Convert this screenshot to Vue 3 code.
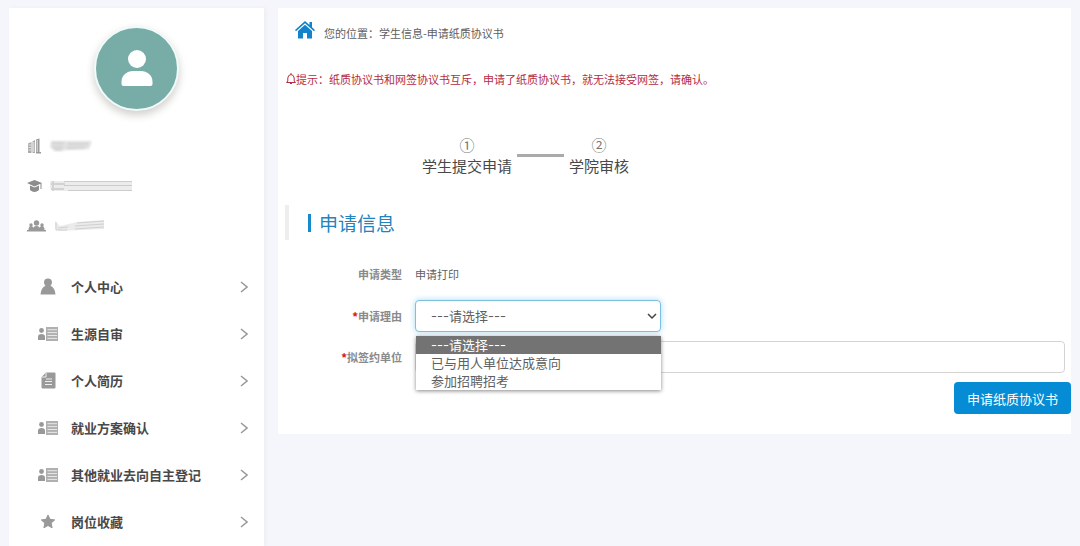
<script setup>
import { ref } from 'vue'

const menu = [
  { label: '个人中心', icon: 'user' },
  { label: '生源自审', icon: 'list' },
  { label: '个人简历', icon: 'doc' },
  { label: '就业方案确认', icon: 'list' },
  { label: '其他就业去向自主登记', icon: 'list' },
  { label: '岗位收藏', icon: 'star' },
]
const options = ['---请选择---', '已与用人单位达成意向', '参加招聘招考']
const reason = ref(options[0])
const company = ref('')
</script>

<template>
  <div class="page">
    <aside class="sidebar">
      <div class="avatar">
        <svg width="32" height="37" viewBox="0 0 32 37" fill="#fff" aria-hidden="true">
          <circle cx="16" cy="9" r="9" />
          <path d="M.5 34V32C.5 25 6 21 12 21h8c6 0 11.500 4 11.500 11v2q0 2-2 2h-27q-2 0-2-2z" />
        </svg>
      </div>
      <ul class="profile">
        <li>
          <svg width="14" height="16" viewBox="0 0 14 16" aria-hidden="true">
            <path d="M1 5.500 4.500 4v11H1zM5.500 3.500 8 2v13H5.500z" fill="#aaa" />
            <path d="M9 1.500 12.500 .5V14H14v1.500H9z" fill="#999" />
            <path d="M1.500 7h2.500M1.500 9.500h2.500M1.500 12h2.500M6.800 4v10M10.200 2v12" stroke="#f4f4f4" stroke-width=".8" />
          </svg>
          <svg class="smudge near" width="46" height="14" viewBox="0 0 46 14" aria-hidden="true">
            <path d="M3 2h16l25 0-3 8-20 1-14 1-5-4z" fill="#e2e2e2" />
            <path d="M4 4h12M4 8h11M6 11h8M20 5h20M19 9h18" stroke="#d2d2d2" stroke-width="2" />
          </svg>
        </li>
        <li>
          <svg width="16" height="14" viewBox="0 0 16 14" fill="#8c8c8c" aria-hidden="true">
            <path d="M7.500 1 15 4 7.500 7.500 0 4zM3 6.500l4.500 2 4.500-2V11q-4.500 4-9 0zM13.500 4h1v6h-1z" />
          </svg>
          <svg class="smudge sharp" width="84" height="14" viewBox="0 0 84 14" aria-hidden="true">
            <path d="M0 2h82v10H5L0 9z" fill="#ececec" />
            <path d="M3 2v10M1 5h14M1 10h13" stroke="#d2d2d2" stroke-width="2" />
            <path d="M14 2.500h68M14 6.500h68M18 11.500h64" stroke="#ccc" />
          </svg>
        </li>
        <li>
          <svg width="19" height="12" viewBox="0 0 19 12" fill="#999" aria-hidden="true">
            <circle cx="9.500" cy="3" r="2.700" /><path d="M5.500 11q0-5 4-5t4 5z" />
            <circle cx="4" cy="5" r="1.700" /><path d="M1.500 10q0-4 2.500-4t2.500 4z" />
            <circle cx="15" cy="5" r="1.700" /><path d="M12.500 10q0-4 2.500-4t2.500 4zM0 10h19v1.500H0z" />
          </svg>
          <svg class="smudge sharp" width="54" height="14" viewBox="0 0 54 14" aria-hidden="true">
            <path d="M2 2l5 5 17-4 27-2v9l-24 1-20 1-5-2z" fill="#ebebeb" />
            <path d="M3 3v8h11M5 9l10-1M24 4l27-2M22 7l29-2M22 10l29-2" stroke="#d0d0d0" fill="none" />
          </svg>
        </li>
      </ul>
      <nav>
        <a v-for="item in menu" :key="item.label" href="#" class="menu-item">
          <span class="menu-icon">
            <svg v-if="item.icon === 'user'" width="16" height="17" viewBox="0 0 16 17" fill="#999" aria-hidden="true">
              <path d="M8 .5c2.700 0 4 1.600 4 3.700 0 1.500-.6 2.700-1.500 3.600q4.500 2 5 8.700H.5Q1 9.800 5.500 7.800C4.600 6.900 4 5.700 4 4.200 4 2.100 5.300.5 8 .5z" />
            </svg>
            <svg v-else-if="item.icon === 'list'" width="20" height="14" viewBox="0 0 20 14" aria-hidden="true">
              <circle cx="3.500" cy="3.500" r="2.400" fill="#999" />
              <path d="M0 13V9.500Q0 7 3.500 7T7 9.500V13z" fill="#999" />
              <path d="M8 0h12v14H8z" fill="#b0b0b0" />
              <path d="M9.500 2.700H19M9.500 5.600H19M9.500 8.500H19M9.500 11.400H19" stroke="#e8e8e8" />
            </svg>
            <svg v-else-if="item.icon === 'doc'" width="15" height="17" viewBox="0 0 15 17" aria-hidden="true">
              <path d="M5 .5h8.500q1 0 1 1v14q0 1-1 1h-12q-1 0-1-1V5z" fill="#999" />
              <path d="M.5 5H5V.5M5 7h6M4 9.500h7M4 12.500h7" stroke="#eee" fill="none" />
            </svg>
            <svg v-else width="16" height="15" viewBox="0 0 16 15" fill="#999" stroke="#999" stroke-linejoin="round" aria-hidden="true">
              <path d="M8 1l2 4.300 4.700.6-3.500 3.200.9 4.700L8 11.500l-4.100 2.300.9-4.700L1.300 5.900 6 5.300z" />
            </svg>
          </span>
          <span class="menu-label">{{ item.label }}</span>
          <svg width="8" height="12" viewBox="0 0 8 12" fill="none" stroke="#999" stroke-width="1.500" aria-hidden="true">
            <path d="M1 1l6 5-6 5" />
          </svg>
        </a>
      </nav>
    </aside>

    <main class="card">
      <div class="crumb">
        <svg width="20" height="18" viewBox="0 0 20 18" fill="#1183cb" aria-hidden="true">
          <path d="M10 0 0 9l1 1.200L10 2.300l9 7.900L20 9l-3-2.700V1h-2.500v3z" />
          <path d="M3 10l7-6.300L17 10v7.500h-5V12H8v5.500H3z" />
        </svg>
        <span>您的位置：学生信息-申请纸质协议书</span>
      </div>
      <p class="tip">
        <svg width="10" height="12" viewBox="0 0 10 12" fill="none" stroke="#b52c45" aria-hidden="true">
          <path d="M.5 9.500h9L8.200 8V5Q8 2 5 1.500 2 2 1.800 5v3zM3.500 9.500q1.500 3 3 0M5 0v1.500" />
        </svg>
        <span>提示：纸质协议书和网签协议书互斥，申请了纸质协议书，就无法接受网签，请确认。</span>
      </p>
      <ol class="steps">
        <li><span class="num">①</span>学生提交申请</li>
        <li class="line" aria-hidden="true"></li>
        <li><span class="num">②</span>学院审核</li>
      </ol>
      <div class="section"><h2>申请信息</h2></div>
      <form class="form" @submit.prevent>
        <span class="label">申请类型</span>
        <span class="value">申请打印</span>
        <label class="label" for="reason"><b>*</b>申请理由</label>
        <div class="select-wrap">
          <select id="reason" v-model="reason">
            <option v-for="o in options" :key="o">{{ o }}</option>
          </select>
          <svg class="caret" width="10" height="7" viewBox="0 0 10 7" fill="none" stroke="#444" stroke-width="1.500" aria-hidden="true">
            <path d="M1 1l4 4 4-4" />
          </svg>
          <ul class="dropdown" role="listbox" aria-label="申请理由">
            <li v-for="o in options" :key="o" role="option" :aria-selected="o === reason" :class="{ active: o === reason }" @click="reason = o">{{ o }}</li>
          </ul>
        </div>
        <label class="label" for="company"><b>*</b>拟签约单位</label>
        <input id="company" v-model="company" type="text" />
        <button type="submit">申请纸质协议书</button>
      </form>
    </main>
  </div>
</template>

<style>
body {
  background: #f5f6fc;
}
</style>

<style scoped>
.page {
  display: flex;
  align-items: flex-start;
  gap: 14px;
  box-sizing: border-box;
  min-height: 100vh;
  padding: 8px 9px 0;
  font-family: "Noto Sans CJK SC", sans-serif;
  font-size: 11px;
  color: #606060;
}
ul, ol {
  list-style: none;
  margin: 0;
  padding: 0;
}
svg {
  display: block;
  flex: none;
}
.sidebar {
  flex: 0 0 255px;
  align-self: stretch;
  background: #fefffe;
  box-shadow: 2px 0 4px #eceef0;
}
.avatar {
  display: flex;
  align-items: center;
  justify-content: center;
  width: 81px;
  height: 81px;
  margin: 18px auto 0;
  border: 2px solid #f0fbf9;
  border-radius: 50%;
  background: #78ada7;
  box-shadow: 0 4px 8px #d0cccc;
}
.profile {
  padding: 15px 18px 17px;
}
.profile li {
  display: flex;
  align-items: center;
  gap: 7px;
  height: 40px;
}
.smudge {
  filter: blur(1px);
}
.smudge.sharp {
  filter: blur(0.5px);
}
.menu-item {
  display: flex;
  align-items: center;
  height: 47px;
  padding: 0 16px 0 29px;
  color: #484848;
  font-size: 13px;
  font-weight: 700;
  text-decoration: none;
}
.menu-icon {
  display: flex;
  justify-content: center;
  width: 20px;
  margin-right: 13px;
}
.menu-label {
  flex: 1;
}
.card {
  flex: 1;
  min-width: 0;
  background: #fff;
  padding-bottom: 20px;
}
.crumb {
  display: flex;
  align-items: center;
  gap: 9px;
  height: 20px;
  padding: 12px 17px 0;
}
.crumb span {
  padding-top: 6px;
}
.tip {
  display: flex;
  align-items: center;
  height: 20px;
  margin: 29px 8px 0;
  color: #b52c45;
}
.steps {
  display: flex;
  align-items: center;
  gap: 5px;
  margin: 45px 0 0 144px;
  color: #484848;
  font-size: 15px;
  line-height: 21px;
}
.steps li {
  display: flex;
  flex-direction: column;
  align-items: center;
}
.steps .line {
  width: 47px;
  height: 3px;
  background: #aaa;
}
.num {
  color: #777;
}
.section {
  display: flex;
  align-items: center;
  height: 35px;
  margin: 29px 7px 0;
  padding-left: 19px;
  border-left: 4px solid #eee;
}
h2 {
  margin: 0;
  padding-left: 8px;
  border-left: 3px solid #168acb;
  color: #2384bd;
  font-size: 19px;
  font-weight: 400;
  line-height: 18px;
}
.form {
  display: grid;
  grid-template-columns: 124px 1fr;
  align-items: center;
  column-gap: 13px;
  row-gap: 9px;
  margin-top: 17px;
}
.label {
  color: #8a8a8a;
  font-weight: 700;
  text-align: right;
}
.label b {
  color: #d22;
}
.value {
  line-height: 34px;
}
.select-wrap {
  position: relative;
  width: 246px;
}
select {
  display: block;
  box-sizing: border-box;
  width: 100%;
  height: 32px;
  padding: 0 15px;
  appearance: none;
  border: 1px solid #7dbfe0;
  border-radius: 4px;
  outline: none;
  background: #fff;
  box-shadow: 0 0 6px #a9dbf0;
  color: #606060;
  font: 13px Inter, "Noto Sans CJK SC", sans-serif;
}
.caret {
  position: absolute;
  top: 13px;
  right: 4px;
}
.dropdown {
  position: absolute;
  z-index: 1;
  top: 36px;
  left: 1px;
  right: 0;
  background: #fff;
  box-shadow: 0 1px 4px #888;
  font: 13px/18px Inter, "Noto Sans CJK SC", sans-serif;
}
.dropdown li {
  height: 18px;
  padding: 0 15px;
}
.dropdown .active {
  background: #737373;
  color: #fff;
}
input {
  box-sizing: border-box;
  height: 32px;
  margin-right: 6px;
  padding: 0 12px;
  border: 1px solid #d4d4d4;
  border-radius: 4px;
  font: inherit;
}
button {
  grid-column: 2;
  justify-self: end;
  height: 32px;
  padding: 0 13px;
  border: 0;
  border-radius: 4px;
  background: #068bd5;
  color: #fff;
  font: 13px "Noto Sans CJK SC", sans-serif;
}
</style>
